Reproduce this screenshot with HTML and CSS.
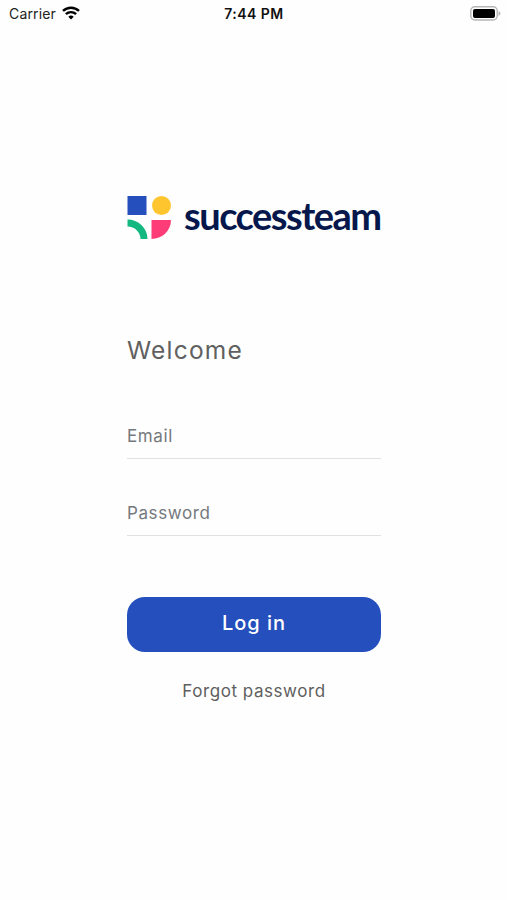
FILE: index.html
```html
<!DOCTYPE html>
<html lang="en">
<head>
  <meta charset="UTF-8">
  <meta name="viewport" content="width=device-width, initial-scale=1.0">
  <title>successteam</title>
  <link rel="stylesheet" href="styles.css">
</head>
<body>
  <header class="status-bar">
    <div class="carrier">
      <span>Carrier</span>
      <svg class="wifi" viewBox="0 0 18 14" width="18" height="14" fill="none" stroke="#000" stroke-width="2.4">
        <path d="M1 4.9a11.6 11.6 0 0 1 16 0"/>
        <path d="M3.9 8.2a7.2 7.2 0 0 1 10.2 0"/>
        <path d="M9 13.6l-2.7-2.9a3.9 3.9 0 0 1 5.4 0z" fill="#000" stroke="none"/>
      </svg>
    </div>
    <span class="time">7:44 PM</span>
    <svg class="battery" viewBox="0 0 31 15" width="31" height="15">
      <rect x="0.8" y="0.8" width="26.4" height="13.2" rx="4" fill="#fff" stroke="#b5b5b5" stroke-width="1.4"/>
      <rect x="3" y="3" width="22" height="9" rx="2" fill="#000"/>
      <path d="M28.5 5a2.6 2.6 0 0 1 0 5z" fill="#b5b5b5"/>
    </svg>
  </header>
  <main class="login">
    <div class="logo">
      <svg class="logo-mark" viewBox="0 0 44 43" width="44" height="43">
        <rect x="0.5" y="0" width="19" height="19" fill="#244fbd"/>
        <circle cx="34.5" cy="9.5" r="9.5" fill="#fec52e"/>
        <path d="M0.5 23.5a20 19.5 0 0 1 20 19.5h-7a13 12.5 0 0 0-13-12.5z" fill="#13b881"/>
        <path d="M24.5 24h19.5a19.5 19 0 0 1-19.5 19z" fill="#fd3c78"/>
      </svg>
      <span class="logo-name">successteam</span>
    </div>
    <h1>Welcome</h1>
    <form class="login-form">
      <input type="email" placeholder="Email" aria-label="Email">
      <input type="password" placeholder="Password" aria-label="Password">
      <button type="submit">Log in</button>
    </form>
    <a class="forgot">Forgot password</a>
  </main>
</body>
</html>
```
FILE: styles.css
```css
* {
  box-sizing: border-box;
}
body {
  margin: 0;
  background-color: #fefefe;
  font-family: Inter, sans-serif;
  color: #606060;
}
.status-bar {
  display: grid;
  grid-template-columns: 1fr auto 1fr;
  align-items: center;
  height: 26px;
  padding: 0 6px 0 9px;
  font-size: 14px;
  color: #222;
}
.carrier {
  display: flex;
  align-items: center;
  gap: 6px;
  letter-spacing: 0.15px;
}
.time {
  margin-right: 2px;
  font-weight: 600;
  font-size: 14px;
  letter-spacing: 0.45px;
  color: #111;
}
.battery {
  justify-self: end;
}
.login {
  display: flex;
  flex-direction: column;
  width: 254px;
  margin: 170px auto 0 127px;
}
.logo {
  display: flex;
  align-items: center;
  gap: 13px;
  height: 43px;
}
.logo-mark {
  flex: none;
}
.logo-name {
  padding-bottom: 4px;
  font-family: Lato, sans-serif;
  font-size: 38px;
  font-weight: 700;
  line-height: 39px;
  letter-spacing: -1.5px;
  color: #06174c;
}
h1 {
  margin: 96px 0 0;
  font-size: 24.5px;
  font-weight: 400;
  line-height: 31px;
  letter-spacing: 1.2px;
}
.login-form {
  display: flex;
  flex-direction: column;
  margin-top: 48px;
}
input {
  height: 45px;
  margin-bottom: 32px;
  padding: 0;
  border: none;
  border-bottom: 1px solid #dfe1e3;
  border-radius: 0;
  outline: none;
  background: none;
  font-family: inherit;
  font-size: 17px;
  letter-spacing: 0.6px;
}
input::placeholder {
  color: #75797d;
}
button {
  height: 55px;
  margin-top: 29px;
  padding: 0 0 3px;
  border: none;
  border-radius: 18px;
  background-color: #244fbd;
  color: #fff;
  font-family: inherit;
  font-size: 20px;
  font-weight: 500;
  letter-spacing: 1px;
  cursor: pointer;
}
.forgot {
  margin-top: 28px;
  font-size: 17px;
  line-height: 22px;
  letter-spacing: 0.55px;
  text-align: center;
}
```
